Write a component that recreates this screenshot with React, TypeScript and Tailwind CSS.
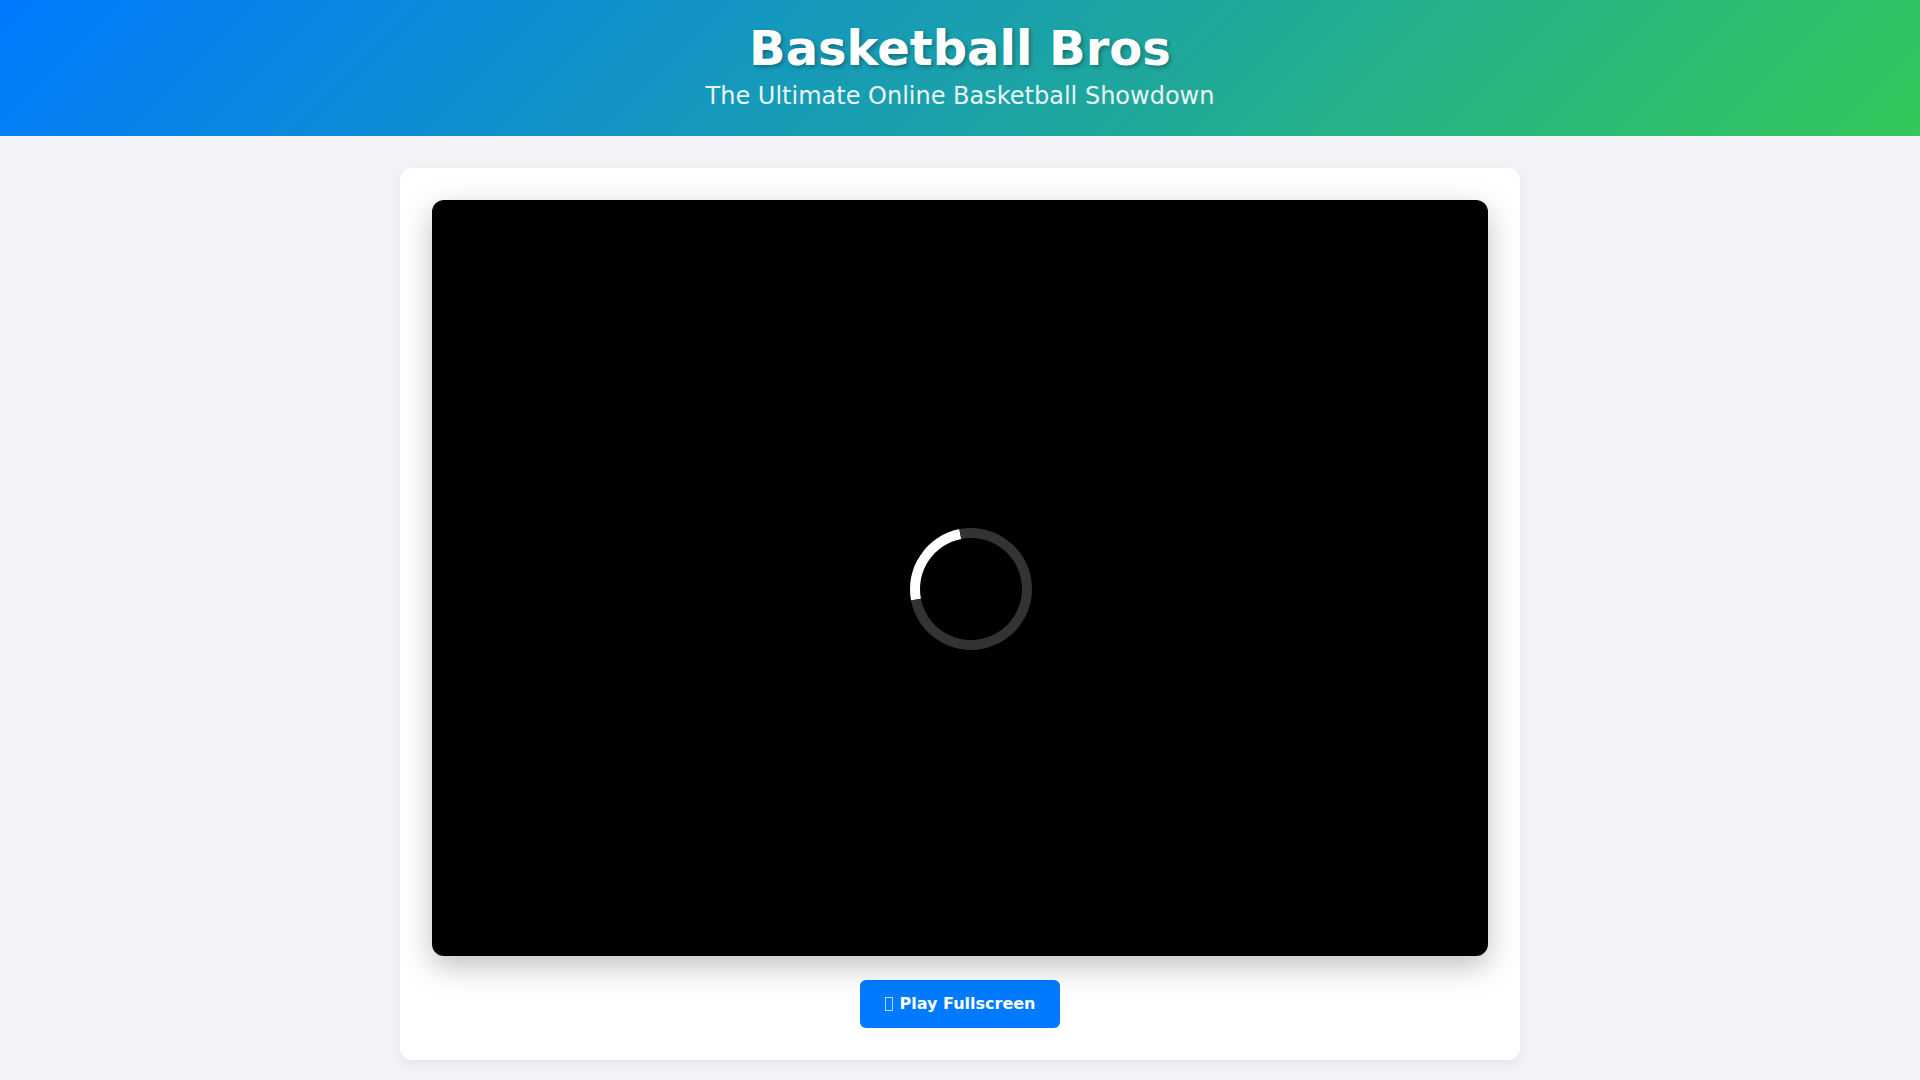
import React from "react";

export default function App() {
  return (
    <div
      className="min-h-screen bg-[#f2f2f7]"
      style={{ fontFamily: '"DejaVu Sans", sans-serif' }}
    >
      <header className="h-[136px] bg-[linear-gradient(135deg,#007aff,#34c759)] text-center text-white pt-[20px]">
        <h1 className="m-0 text-[48px] leading-[1.2] font-bold [text-shadow:2px_2px_4px_rgba(0,0,0,0.3)]">
          Basketball Bros
        </h1>
        <p className="m-0 text-[24px] leading-[1.5] opacity-90">
          The Ultimate Online Basketball Showdown
        </p>
      </header>
      <main className="pt-[32px] pb-[20px]">
        <div className="w-[1120px] mx-auto bg-white rounded-[12px] p-[32px] shadow-[0_4px_12px_rgba(0,0,0,0.06)]">
          <div className="relative w-full h-[756px] bg-black rounded-[12px] shadow-[0_10px_30px_rgba(0,0,0,0.25)] overflow-hidden">
            <div className="absolute left-1/2 top-1/2 -ml-[50px] -mt-[50px] w-[122px] h-[122px] box-border rounded-full border-[10px] border-[#333333] border-t-white rotate-[-56deg]" />
          </div>
          <div className="flex justify-center mt-[24px]">
            <button className="flex items-center justify-center w-[200px] h-[48px] rounded-[6px] bg-[#007bff] text-white text-[16px] font-bold">
              <span className="inline-block w-[8px] h-[14px] border border-white/70 mr-[7px]" />
              Play Fullscreen
            </button>
          </div>
        </div>
      </main>
    </div>
  );
}
